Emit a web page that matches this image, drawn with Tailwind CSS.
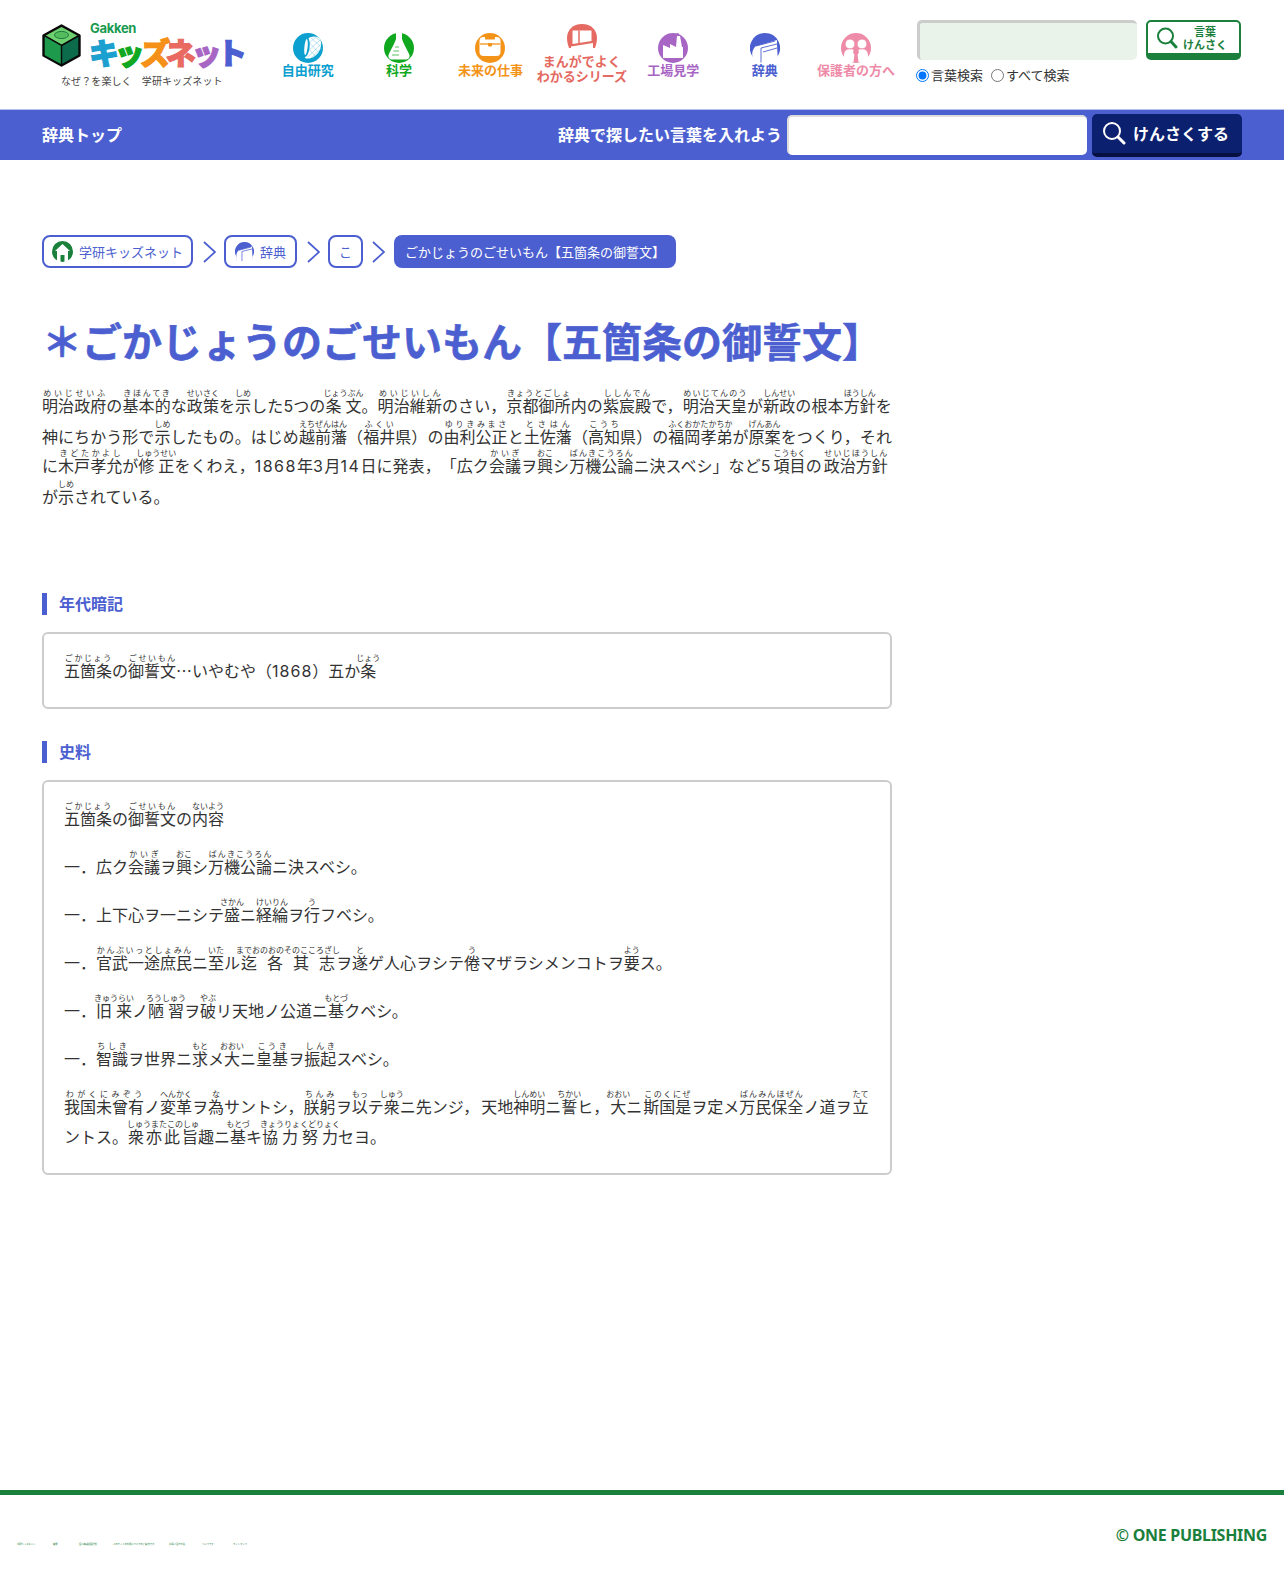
<!DOCTYPE html>
<html lang="ja">
<head>
<meta charset="utf-8">
<script src="https://cdn.jsdelivr.net/npm/@tailwindcss/browser@4"></script>
<title>ごかじょうのごせいもん</title>
</head>
<body class="bg-white text-[#333] font-['Noto_Sans_CJK_JP',sans-serif] [text-spacing-trim:space-all]">
<div class="w-[1284px] h-[1590px] flex flex-col overflow-hidden">
  <header class="h-[109px] flex pl-[42px]">
    <a class="w-[220px] relative block">
      <svg class="absolute left-0 top-[24px] w-[39px] h-[43px]" viewBox="0 0 39 43"><path d="M19.5 1.5 37.5 11.5V31.5L19.5 41.5 1.5 31.5V11.5Z" fill="#0c6b4a" stroke="#0a0a0a" stroke-width="2.4" stroke-linejoin="round"/><path d="M19.5 2 37 11.5 19.5 21.5 2 11.5Z" fill="#6fd06f" stroke="#0a0a0a" stroke-width="1.6" stroke-linejoin="round"/><path d="M2 11.5 19.5 21.5V41L2 31.5Z" fill="#1d9a4c" stroke="#0a0a0a" stroke-width="1.4" stroke-linejoin="round"/><ellipse cx="19.5" cy="11" rx="7" ry="3.6" fill="#55bc5e" stroke="#1b7a3d" stroke-width="1"/></svg>
      <span class="absolute left-[48px] top-[20px] text-[13px] leading-[16px] font-bold text-[#1a9a50] tracking-[-0.3px] font-['Inter',sans-serif]">Gakken</span>
      <span class="absolute left-[47px] top-[29px] text-[30px] leading-[44px] font-black tracking-[-4.4px] whitespace-nowrap [-webkit-text-stroke:1.2px]"><span class="text-[#1ba0d0]">キ</span><span class="text-[#10a820]">ッ</span><span class="text-[#f59018]">ズ</span><span class="text-[#e86a60]">ネ</span><span class="text-[#a866c4]">ッ</span><span class="text-[#4c5fd0]">ト</span></span>
      <span class="absolute left-[19px] top-[73px] text-[10px] leading-[16px] tracking-[.1px] text-[#444] whitespace-nowrap">なぜ？を楽しく　学研キッズネット</span>
    </a>
    <nav class="flex w-[642px] pt-[22px] text-[13px] leading-[16px] font-bold text-center">
      <a class="w-[91.4px] flex flex-col items-center text-[#0ba0cf] pt-[11px]">
        <svg class="w-[30px] h-[30px]" viewBox="0 0 30 30"><circle cx="15" cy="15" r="15" fill="#0ba0cf"/><path d="M13 7C18 2 25 3 27 6 30 11 27 20 22 23 18 26 14 26 12 25Z" fill="#fff"/><g stroke="#7fcbe4" stroke-width=".5" fill="none"><path d="M15 8 26 20M18 5 28 14M14 14 22 23M22 4 29 9M14 19 27 7M15 24 28 11M18 25 29 15M14 12 24 3"/></g><ellipse cx="13" cy="14" rx="3.6" ry="10" fill="#0ba0cf" transform="rotate(6 13 14)"/><ellipse cx="13" cy="14" rx="1.6" ry="8" fill="#fff" transform="rotate(6 13 14)"/></svg>
        <span class="-mt-[1px]">自由研究</span>
      </a>
      <a class="w-[91.4px] flex flex-col items-center text-[#0fa81e] pt-[11px]">
        <svg class="w-[30px] h-[30px]" viewBox="0 0 30 30"><circle cx="15" cy="15" r="15" fill="#0fa81e"/><path d="M12 0H18V6C20 12 24 18 25.500 22 26 25 24 26.500 22 26.500H8C6 26.500 4 25 4.500 22 6 18 10 12 12 6Z" fill="#fff"/><path d="M11 14H15M9.500 18H15M8 22H15" stroke="#0fa81e" stroke-width=".7"/></svg>
        <span class="-mt-[1px]">科学</span>
      </a>
      <a class="w-[91.4px] flex flex-col items-center text-[#f39318] pt-[11px]">
        <svg class="w-[30px] h-[30px]" viewBox="0 0 30 30"><circle cx="15" cy="15" r="15" fill="#f39318"/><rect x="4.500" y="4" width="21" height="19" rx="4" fill="#fff"/><rect x="10" y="1.500" width="10" height="5" rx="1" fill="#f39318"/><path d="M5 11H25" stroke="#f39318" stroke-width="1.300"/><rect x="13" y="10" width="4" height="3.500" rx="1" fill="#f39318"/></svg>
        <span class="-mt-[1px]">未来の仕事</span>
      </a>
      <a class="w-[91.4px] flex flex-col items-center text-[#e56a62] leading-[15px] pt-[2px]">
        <svg class="w-[30px] h-[24px]" viewBox="0 0 30 24"><path d="M15 0C24 0 30 6 30 14 30 18 29 21 28 24H2C1 21 0 18 0 14 0 6 6 0 15 0Z" fill="#e56a62"/><path d="M5.500 6.500H24.500V17L5.500 20Z" fill="#fff"/><path d="M12 6.500V19" stroke="#e56a62" stroke-width="1.500"/><path d="M4 24V22.500L26 19V24Z" fill="#fff"/></svg>
        <span class="mt-[5px] whitespace-nowrap">まんがでよく<br>わかるシリーズ</span>
      </a>
      <a class="w-[91.4px] flex flex-col items-center text-[#a866c4] pt-[11px]">
        <svg class="w-[30px] h-[30px]" viewBox="0 0 30 30"><circle cx="15" cy="15" r="15" fill="#a866c4"/><path d="M5 25V12L12 15V11L18 14 19 3H22L24 14 25 14V25Z" fill="#fff"/><path d="M19.500 0 21 3" stroke="#a866c4" stroke-width="1.500"/></svg>
        <span class="-mt-[1px]">工場見学</span>
      </a>
      <a class="w-[91.4px] flex flex-col items-center text-[#4c5fd0] pt-[11px]">
        <svg class="w-[30px] h-[30px]" viewBox="0 0 30 30"><path d="M15 0A15 15 0 0 1 27 24V30H3V24A15 15 0 0 1 15 0Z" fill="#4c5fd0"/><path d="M3 30V25C1 21 3 15 6 13L27 7 27 12 28 30Z" fill="#fff"/><path d="M6 13 25 8M11 30V15L27 11M13 19 27 15" stroke="#4c5fd0" stroke-width=".9" fill="none"/><path d="M0 30H30" stroke="#fff"/></svg>
        <span class="-mt-[1px]">辞典</span>
      </a>
      <a class="w-[91.4px] flex flex-col items-center text-[#ee8ba8] pt-[11px]">
        <svg class="w-[30px] h-[30px]" viewBox="0 0 30 30"><circle cx="15" cy="15" r="15" fill="#ee8ba8"/><path d="M3 29V22C3 18 6 16 9 16 12 16 15 18 15 20 15 18 18 16 21 16 24 16 27 18 27 22V29Z" fill="#fff"/><circle cx="9" cy="11" r="5" fill="#fff" stroke="#ee8ba8" stroke-width="1"/><circle cx="21" cy="11" r="5" fill="#fff" stroke="#ee8ba8" stroke-width="1"/><circle cx="15" cy="19" r="2.800" fill="#ee8ba8"/><path d="M12.500 29 13.500 21H16.500L17.500 29Z" fill="#ee8ba8"/></svg>
        <span class="-mt-[1px] whitespace-nowrap">保護者の方へ</span>
      </a>
    </nav>
    <form class="ml-[13px] pt-[20px] w-[330px]">
      <div class="flex gap-[9px]">
        <input type="text" class="w-[220px] h-[40px] bg-[#e9f3ea] rounded-[5px] border-t-[3px] border-l-[3px] border-[#ccc]">
        <button type="button" class="w-[95px] h-[40px] bg-white border-2 border-b-[7px] border-[#1a803c] rounded-[5px] flex items-center pl-[8px]">
          <svg class="w-[22px] h-[22px] shrink-0" viewBox="0 0 22 22" fill="none" stroke="#1a803c"><circle cx="9.500" cy="9" r="7.500" stroke-width="2"/><path d="M15 14.500 20 20" stroke-width="3" stroke-linecap="round"/></svg>
          <span class="ml-[2px] w-[50px] text-[11px] leading-[13px] font-bold text-[#1a803c] text-center">言葉<br>けんさく</span>
        </button>
      </div>
      <div class="flex items-center text-[13px] leading-[18px] text-[#333] mt-[6px]">
        <label class="flex items-center"><input type="radio" name="s" checked class="w-[13px] h-[13px] mr-[2px] -ml-[1px] accent-[#0075ff]">言葉検索</label>
        <label class="flex items-center ml-[8px]"><input type="radio" name="s" class="w-[13px] h-[13px] mr-[2px]">すべて検索</label>
      </div>
    </form>
  </header>

  <div class="h-[51px] bg-[#4c5fd0] border-t border-[#b8c0ea] flex items-center pl-[42px] text-white font-bold text-[16px] leading-[24px]">
    <a class="w-[516px] -mt-[3px]">辞典トップ</a>
    <span class="w-[229px] whitespace-nowrap -mt-[3px]">辞典で探したい言葉を入れよう</span>
    <input type="text" class="w-[300px] h-[40px] bg-white rounded-[5px] border-t-2 border-l-2 border-[#ddd]">
    <button type="button" class="ml-[5px] w-[150px] h-[43px] bg-[#0c2070] border-b-[4px] border-[#050f40] rounded-[5px] flex items-center pl-[10px]">
      <svg class="w-[24px] h-[24px] shrink-0" viewBox="0 0 24 24" fill="none" stroke="#fff"><circle cx="10" cy="10" r="8" stroke-width="2"/><path d="M16 16 22 22" stroke-width="3" stroke-linecap="round"/></svg>
      <span class="ml-[7px]">けんさくする</span>
    </button>
  </div>

  <main class="pl-[42px] w-[892px] flex-1">
    <ol class="flex items-center mt-[75px] text-[13px] leading-[20px] text-[#4c5fd0]">
      <li class="h-[33px] w-[151px] border-2 border-[#4c5fd0] rounded-[8px] flex items-center pl-[8px]">
        <svg class="w-[21px] h-[21px] shrink-0" viewBox="0 0 21 21"><circle cx="10.500" cy="10.500" r="10.500" fill="#1a803c"/><path d="M10.500 3 18 10 16 10 16 21H12.500V14H8.500V21H5V10L3 10Z" fill="#fff"/></svg>
        <span class="ml-[6px] whitespace-nowrap">学研キッズネット</span>
      </li>
      <li class="ml-[10px] mr-[8px]"><svg class="w-[13px] h-[22px] block" viewBox="0 0 13 22" fill="none" stroke="#4c5fd0" stroke-width="1.700"><path d="M1 1 12 11 1 21"/></svg></li>
      <li class="h-[33px] w-[73px] border-2 border-[#4c5fd0] rounded-[8px] flex items-center pl-[9px]">
        <svg class="w-[19px] h-[19px] shrink-0" viewBox="0 0 30 30"><path d="M15 0A15 15 0 0 1 27 24V30H3V24A15 15 0 0 1 15 0Z" fill="#4c5fd0"/><path d="M3 30V25C1 21 3 15 6 13L27 7 27 12 28 30Z" fill="#fff"/><path d="M6 13 25 8M11 30V15L27 11" stroke="#4c5fd0" stroke-width="1.200" fill="none"/></svg>
        <span class="ml-[6px]">辞典</span>
      </li>
      <li class="ml-[10px] mr-[8px]"><svg class="w-[13px] h-[22px] block" viewBox="0 0 13 22" fill="none" stroke="#4c5fd0" stroke-width="1.700"><path d="M1 1 12 11 1 21"/></svg></li>
      <li class="h-[33px] w-[35px] border-2 border-[#4c5fd0] rounded-[8px] flex items-center justify-center">こ</li>
      <li class="ml-[9px] mr-[9px]"><svg class="w-[13px] h-[22px] block" viewBox="0 0 13 22" fill="none" stroke="#4c5fd0" stroke-width="1.700"><path d="M1 1 12 11 1 21"/></svg></li>
      <li class="h-[33px] w-[282px] bg-[#4c5fd0] text-white rounded-[8px] flex items-center pl-[11px] whitespace-nowrap">ごかじょうのごせいもん【五箇条の御誓文】</li>
    </ol>

    <h1 class="mt-[49px] text-[40px] leading-[46px] font-bold text-[#4c5fd0] whitespace-nowrap [-webkit-text-stroke:0.6px]">＊ごかじょうのごせいもん【五箇条の御誓文】</h1>

    <p class="mt-[25px] text-[16px] leading-[29.5px] text-justify"><ruby>明治政府<rt>めいじせいふ</rt></ruby>の<ruby>基本的<rt>きほんてき</rt></ruby>な<ruby>政策<rt>せいさく</rt></ruby>を<ruby>示<rt>しめ</rt></ruby>した<span class="font-['Inter']">5</span>つの<ruby>条文<rt>じょうぶん</rt></ruby>。<ruby>明治維新<rt>めいじいしん</rt></ruby>のさい，<ruby>京都御所<rt>きょうとごしょ</rt></ruby>内の<ruby>紫宸殿<rt>ししんでん</rt></ruby>で，<ruby>明治天皇<rt>めいじてんのう</rt></ruby>が<ruby>新政<rt>しんせい</rt></ruby>の根本<ruby>方針<rt>ほうしん</rt></ruby>を神にちかう形で<ruby>示<rt>しめ</rt></ruby>したもの。はじめ<ruby>越前藩<rt>えちぜんはん</rt></ruby>（<ruby>福井<rt>ふくい</rt></ruby>県）の<ruby>由利公正<rt>ゆりきみまさ</rt></ruby>と<ruby>土佐藩<rt>とさはん</rt></ruby>（<ruby>高知<rt>こうち</rt></ruby>県）の<ruby>福岡孝弟<rt>ふくおかたかちか</rt></ruby>が<ruby>原案<rt>げんあん</rt></ruby>をつくり，それに<ruby>木戸孝允<rt>きどたかよし</rt></ruby>が<ruby>修正<rt>しゅうせい</rt></ruby>をくわえ，<span class="font-['Inter'] tracking-[1.5px]">1868</span>年<span class="font-['Inter'] tracking-[1.5px]">3</span>月<span class="font-['Inter'] tracking-[1.5px]">14</span>日に発表，「広ク<ruby>会議<rt>かいぎ</rt></ruby>ヲ<ruby>興<rt>おこ</rt></ruby>シ<ruby>万機公論<rt>ばんきこうろん</rt></ruby>ニ決スベシ」など<span class="font-['Inter'] mr-[3px]">5</span><ruby>項目<rt>こうもく</rt></ruby>の<ruby class="ml-[2px]">政治方針<rt>せいじほうしん</rt></ruby>が<ruby>示<rt>しめ</rt></ruby>されている。</p>

    <h2 class="mt-[82px] h-[22px] border-l-[5px] border-[#4c5fd0] pl-[12px] text-[16px] leading-[20px] font-bold text-[#4c5fd0]">年代暗記</h2>
    <div class="mt-[17px] border-2 border-[#ccc] rounded-[6px] px-[20px] pt-[19px] pb-[21px] text-[16px] leading-[30px]">
      <p><ruby>五箇条<rt>ごかじょう</rt></ruby>の<ruby>御誓文<rt>ごせいもん</rt></ruby>…いやむや（<span class="font-['Inter'] tracking-[1px]">1868</span>）五か<ruby>条<rt>じょう</rt></ruby></p>
    </div>

    <h2 class="mt-[32px] h-[22px] border-l-[5px] border-[#4c5fd0] pl-[12px] text-[16px] leading-[20px] font-bold text-[#4c5fd0]">史料</h2>
    <div class="mt-[17px] border-2 border-[#ccc] rounded-[6px] px-[20px] pt-[19px] pb-[22px] text-[16px] leading-[30px] flex flex-col gap-[16px]">
      <p><ruby>五箇条<rt>ごかじょう</rt></ruby>の<ruby>御誓文<rt>ごせいもん</rt></ruby>の<ruby>内容<rt>ないよう</rt></ruby></p>
      <p>一．広ク<ruby>会議<rt>かいぎ</rt></ruby>ヲ<ruby>興<rt>おこ</rt></ruby>シ<ruby>万機公論<rt>ばんきこうろん</rt></ruby>ニ決スベシ。</p>
      <p>一．上下心ヲ一ニシテ<ruby>盛<rt>さかん</rt></ruby>ニ<ruby>経綸<rt>けいりん</rt></ruby>ヲ<ruby>行<rt>う</rt></ruby>フベシ。</p>
      <p>一．<ruby>官武一途庶民<rt>かんぶいっとしょみん</rt></ruby>ニ<ruby>至<rt>いた</rt></ruby>ル<ruby>迄各其志<rt>までおのおのそのこころざし</rt></ruby>ヲ<ruby>遂<rt>と</rt></ruby>ゲ人心ヲシテ<ruby>倦<rt>う</rt></ruby>マザラシメンコトヲ<ruby>要<rt>よう</rt></ruby>ス。</p>
      <p>一．<ruby>旧来<rt>きゅうらい</rt></ruby>ノ<ruby>陋習<rt>ろうしゅう</rt></ruby>ヲ<ruby>破<rt>やぶ</rt></ruby>リ天地ノ公道ニ<ruby>基<rt>もとづ</rt></ruby>クベシ。</p>
      <p>一．<ruby>智識<rt>ちしき</rt></ruby>ヲ世界ニ<ruby>求<rt>もと</rt></ruby>メ<ruby>大<rt>おおい</rt></ruby>ニ<ruby>皇基<rt>こうき</rt></ruby>ヲ<ruby>振起<rt>しんき</rt></ruby>スベシ。</p>
      <p class="text-justify"><ruby>我国未曾有<rt>わがくにみぞう</rt></ruby>ノ<ruby>変革<rt>へんかく</rt></ruby>ヲ<ruby>為<rt>な</rt></ruby>サントシ，<ruby>朕躬<rt>ちんみ</rt></ruby>ヲ<ruby>以<rt>もっ</rt></ruby>テ<ruby>衆<rt>しゅう</rt></ruby>ニ先ンジ，<span class="ml-[2px]">天地</span><ruby>神明<rt>しんめい</rt></ruby>ニ<ruby>誓<rt>ちかい</rt></ruby>ヒ，<ruby class="ml-[1px]">大<rt>おおい</rt></ruby>ニ<ruby class="ml-[1px]">斯国是<rt>このくにぜ</rt></ruby>ヲ定メ<ruby>万民保全<rt>ばんみんほぜん</rt></ruby>ノ道ヲ<ruby class="ml-[1px]">立<rt>たて</rt></ruby>ントス。<ruby>衆亦此旨<rt>しゅうまたこのしゅ</rt></ruby>趣ニ<ruby>基<rt>もとづ</rt></ruby>キ<ruby>協力努力<rt>きょうりょくどりょく</rt></ruby>セヨ。</p>
    </div>
  </main>

  <footer class="h-[100px] border-t-[5px] border-[#1a803c] flex items-center justify-between">
    <ul class="flex items-center pl-[17px] pt-[2px] text-[2.3px] leading-[4px] text-[#1a803c] whitespace-nowrap">
      <li class="w-[36px]">学研キッズネット</li>
      <li class="w-[26px] font-bold">科学</li>
      <li class="w-[34px]">個人情報保護方針</li>
      <li class="w-[56px]">このサイトの利用についてのご案内です</li>
      <li class="w-[33px]">お問い合わせ先</li>
      <li class="w-[31px]">ヘルプです</li>
      <li>サイトマップ</li>
    </ul>
    <p class="pr-[17px] pb-[15px] text-[16px] leading-[24px] font-bold tracking-[-.3px] text-[#1a803c] font-['Noto_Sans',sans-serif]">© ONE PUBLISHING</p>
  </footer>
</div>
</body>
</html>
